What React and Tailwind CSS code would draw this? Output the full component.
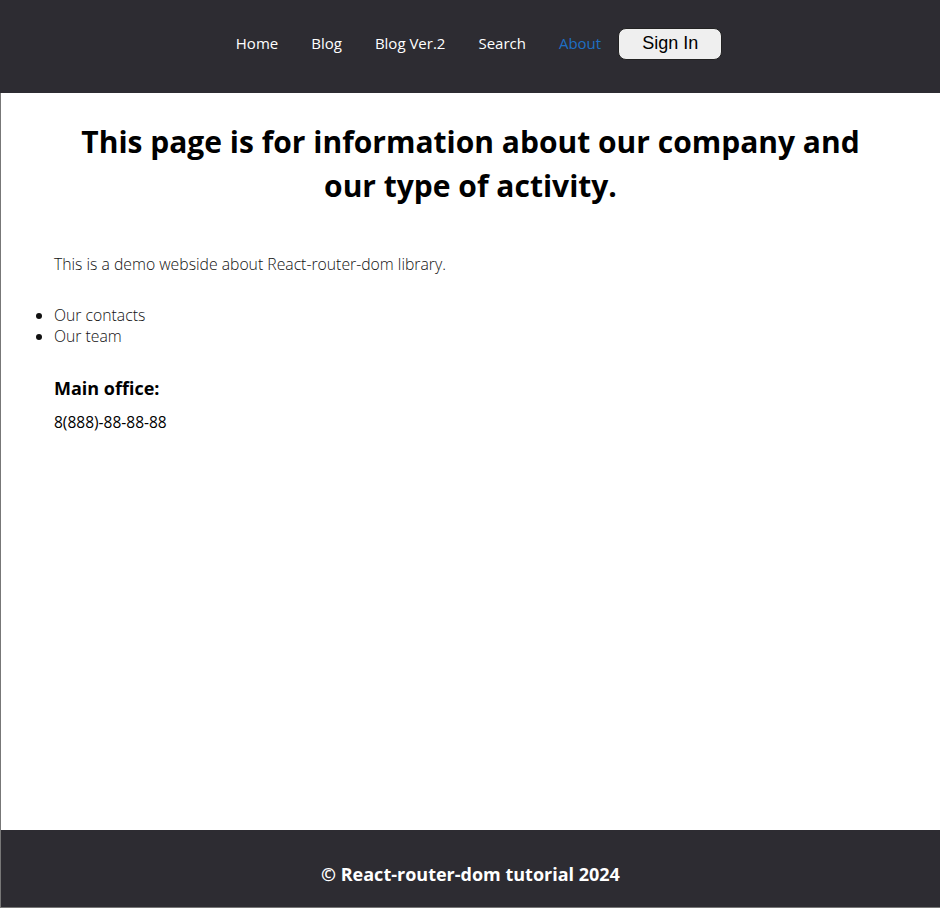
import React from "react";

const links = ["Home", "Blog", "Blog Ver.2", "Search", "About"];

export default function App() {
  return (
    <div
      className="flex min-h-[908px] flex-col bg-white text-black"
      style={{ fontFamily: '"Open Sans", "Noto Sans", sans-serif' }}
    >
      {/* Header */}
      <header className="flex h-[93px] items-center justify-center bg-[#2d2c32] pb-[6px]">
        <nav className="flex items-center gap-[33px] pl-[18px]">
          {links.map((l) => (
            <a
              key={l}
              href="#"
              className={`text-[15px] ${l === "About" ? "text-[#1e6fc4]" : "text-white"}`}
            >
              {l}
            </a>
          ))}
          <button
            className="-ml-[16px] h-[32px] w-[104px] rounded-lg border border-[#222] bg-[#efefef] text-[18px] text-black"
            style={{ fontFamily: '"Liberation Sans", Arial, sans-serif' }}
          >
            Sign In
          </button>
        </nav>
      </header>

      {/* Content */}
      <main className="flex-1 border-l border-[#777] pb-10">
        <h1 className="mx-auto mt-[27px] max-w-[820px] text-center text-[30px] font-bold leading-[44px]">
          This page is for information about our company and
          <br />
          our type of activity.
        </h1>

        <p className="mt-[44px] pl-[53px] text-[15.75px] font-light leading-[24px] text-[#111]">
          This is a demo webside about React-router-dom library.
        </p>

        <ul className="mt-[29px] list-disc pl-[53px] text-[15.75px] font-light leading-[21px] text-[#111]">
          <li>Our contacts</li>
          <li>Our team</li>
        </ul>

        <h3 className="mt-[28px] pl-[53px] text-[18px] font-bold leading-[27px]">Main office:</h3>
        <p className="mt-[8px] pl-[53px] text-[15.5px] leading-[24px]">8(888)-88-88-88</p>
      </main>

      {/* Footer */}
      <footer className="flex h-[78px] items-center justify-center border-b border-l border-[#777] bg-[#2d2c32] pt-[12px]">
        <p className="text-[18px] font-bold text-white">© React-router-dom tutorial 2024</p>
      </footer>
    </div>
  );
}
